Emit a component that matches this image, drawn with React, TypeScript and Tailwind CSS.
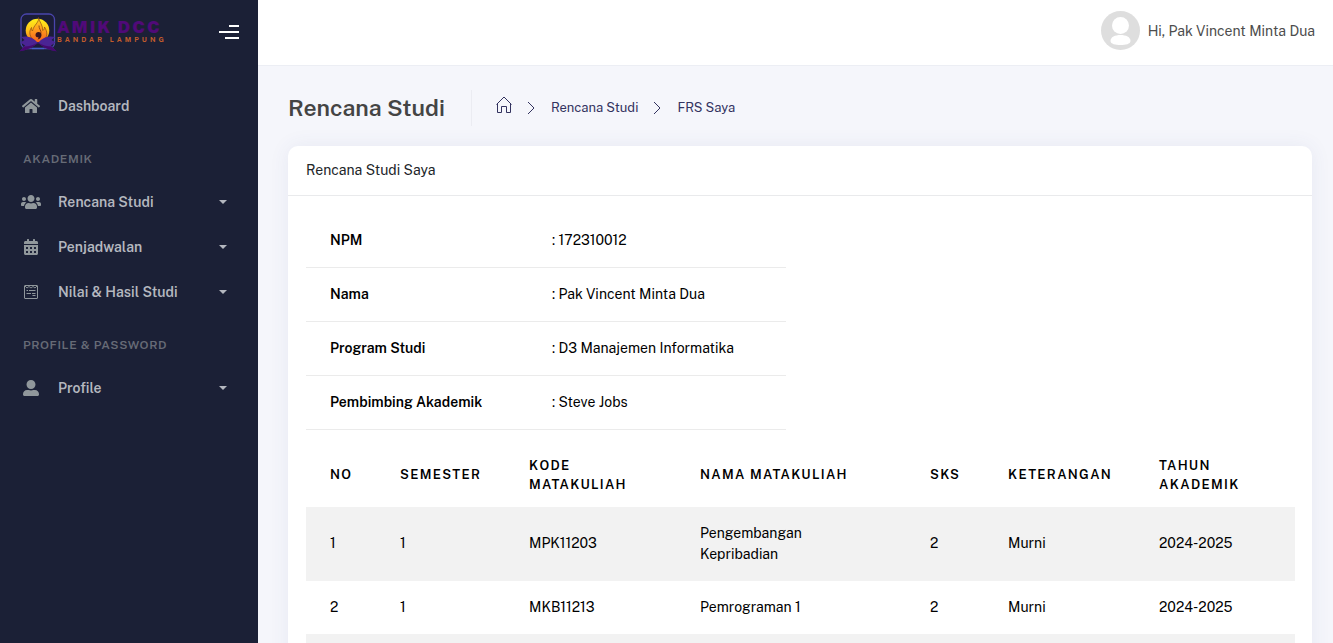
import { FaCalendarAlt, FaHome, FaUserAlt, FaUsers } from "react-icons/fa";
import type { ReactNode } from "react";

function LogoMark() {
  return (
    <svg viewBox="0 0 38 40" className="h-10 w-[38px] shrink-0" aria-hidden="true">
      <defs>
        <linearGradient id="sun" x1="0" y1="0" x2="0" y2="1">
          <stop offset="0" stopColor="#fff01a" />
          <stop offset="0.5" stopColor="#ffc01a" />
          <stop offset="1" stopColor="#f0701c" />
        </linearGradient>
        <linearGradient id="flame" x1="0" y1="0" x2="0" y2="1">
          <stop offset="0" stopColor="#ffd81e" />
          <stop offset="0.5" stopColor="#ff9a1e" />
          <stop offset="1" stopColor="#f4611e" />
        </linearGradient>
      </defs>
      <rect x="2" y="2" width="33.500" height="34.500" rx="5.500" fill="#1b1d38" stroke="#4a45ac" strokeWidth="1.300" />
      <circle cx="18.500" cy="18.500" r="11.800" fill="url(#sun)" />
      <path d="M19.500 5.500c1 5-5 7.500-6 13.500-1-1-1.200-2-1-3.500-3 4.500-2 10.500 3 14.500h8c5-4 5.500-10 2-15 0 2-.6 3-1.800 3.500C24 13.500 20.500 10 19.500 5.500z" fill="url(#flame)" />
      <path d="M15.500 29c-5-4-6-9-3-13.500-.2 1.500 0 2.500 1 3.500 1-6 7-8.500 6-13.500 1 4.500 4.500 8 4.200 13 1.200-.5 1.800-1.500 1.800-3.500 3.500 5 3 11-2 15" fill="none" stroke="#8a4a14" strokeWidth="0.700" />
      <path d="M20 13.500c-.3 3 2.500 5 2 8" fill="none" stroke="#7a3414" strokeWidth="0.800" />
      <path d="M16.500 23c0-1.800 1.300-3 3-3s3 1.300 3 3c0 2.200-1.500 4-4 4.500 1-.8 1.200-1.500.8-2.200-1.600.2-2.800-.8-2.800-2.300z" fill="#3a1420" />
      <path d="M19 31C14 25 8 23.500 2 25l3.500 3L1.500 30.500 6 33.500l-5 5.500c7-1 13-4 18-8z" fill="#4a2494" />
      <path d="M19 31C24 25 30 23.500 36 25l-3.500 3 4 2.500-4.500 3 5 5.500c-7-1-13-4-18-8z" fill="#4a2494" />
      <path d="M0 39.500c7-1 14-4 19-8.500 5 4.500 12 7.500 19 8.500L32.500 34.500C28 34.500 23 33 19 30.500c-4 2.500-9 4-13.500 4z" fill="#46096f" />
      <path d="M13 36.500h12" stroke="#4560c8" strokeWidth="1.300" />
    </svg>
  );
}

function NoteIcon() {
  return (
    <svg viewBox="0 0 16 16" className="h-4 w-4" fill="none" stroke="currentColor" aria-hidden="true">
      <rect x="1.500" y="1.500" width="13" height="13" rx="0.500" />
      <path d="M2 2l2 2 2-1.500L8 4l2-1.500L12 4l2-2" strokeWidth="0.900" />
      <path d="M3.500 6.500h1.500M6 6.500h6.500M3.500 9.500h4.500M9 9.500h3.500M9.500 11.500h3" />
    </svg>
  );
}

function HouseIcon() {
  return (
    <svg viewBox="0 0 16 17" className="h-[17px] w-4" fill="none" stroke="currentColor" strokeWidth="1" aria-hidden="true">
      <path d="M.5 8.500L8 1l7.500 7.500M1.500 7.800v8.700h4V10.500h5v6h4V7.800" />
    </svg>
  );
}

function Chevron() {
  return (
    <svg viewBox="0 0 8 14" className="h-3.5 w-2" fill="none" stroke="currentColor" strokeWidth="1" aria-hidden="true">
      <path d="M1 1l6 6-6 6" />
    </svg>
  );
}

function Caret() {
  return (
    <svg viewBox="0 0 8 4" className="mr-[31px] h-1 w-2" fill="currentColor" aria-hidden="true">
      <path d="M0 0h8L4 4z" />
    </svg>
  );
}

function MenuItem({ icon, label, dropdown = true }: { icon: ReactNode; label: string; dropdown?: boolean }) {
  const inner = (
    <>
      <span className="flex w-5 justify-center text-[#90979b]">{icon}</span>
      <span className="ml-[17px] flex-1 text-left">{label}</span>
      {dropdown && <Caret />}
    </>
  );
  const style = "flex h-[45px] w-full items-center pl-[21px] text-sm font-semibold text-[#b4b7bf]";
  return (
    <li>
      {dropdown ? (
        <button type="button" className={style}>{inner}</button>
      ) : (
        <a href="#dashboard" className={style}>{inner}</a>
      )}
    </li>
  );
}

function MenuHeading({ children }: { children: ReactNode }) {
  return (
    <h2 className="flex h-[51px] items-center pt-2.5 pl-[23px] text-xs font-semibold tracking-wider text-[#676b76]">{children}</h2>
  );
}

function Sidebar() {
  return (
    <aside className="w-[258px] shrink-0 bg-[#1b2036]">
      <div className="flex h-[63px] items-center justify-between px-[19px]">
        <a href="#home" className="flex items-center">
          <LogoMark />
          <span className="flex flex-col whitespace-nowrap">
            <span className="text-[17px] leading-[17px] font-black tracking-[2px] text-[#500a78]">AMIK DCC</span>
            <span className="text-[7px] leading-[8px] font-bold tracking-[3px] text-[#c25c2c]">BANDAR LAMPUNG</span>
          </span>
        </a>
        <button type="button" aria-label="Toggle menu" className="flex w-5 flex-col items-end gap-1">
          <span className="h-0.5 w-2.5 bg-white" />
          <span className="h-0.5 w-5 bg-white" />
          <span className="h-0.5 w-3.5 bg-white" />
        </button>
      </div>
      <nav className="pt-5">
        <ul>
          <MenuItem icon={<FaHome className="h-[18px] w-[18px]" />} label="Dashboard" dropdown={false} />
        </ul>
        <MenuHeading>AKADEMIK</MenuHeading>
        <ul>
          <MenuItem icon={<FaUsers className="h-5 w-5" />} label="Rencana Studi" />
          <MenuItem icon={<FaCalendarAlt className="h-4 w-4" />} label="Penjadwalan" />
          <MenuItem icon={<NoteIcon />} label="Nilai & Hasil Studi" />
        </ul>
        <MenuHeading>PROFILE &amp; PASSWORD</MenuHeading>
        <ul>
          <MenuItem icon={<FaUserAlt className="h-4 w-4" />} label="Profile" />
        </ul>
      </nav>
    </aside>
  );
}

const student = [
  ["NPM", "172310012"],
  ["Nama", "Pak Vincent Minta Dua"],
  ["Program Studi", "D3 Manajemen Informatika"],
  ["Pembimbing Akademik", "Steve Jobs"],
];

const columns = [
  { title: "NO", width: "w-[70px]" },
  { title: "SEMESTER", width: "w-[129px]" },
  { title: "KODE MATAKULIAH", width: "w-[171px]" },
  { title: "NAMA MATAKULIAH", width: "" },
  { title: "SKS", width: "w-[78px]" },
  { title: "KETERANGAN", width: "w-[151px]" },
  { title: "TAHUN AKADEMIK", width: "w-[160px]" },
];

const courses = [
  ["1", "1", "MPK11203", "Pengembangan Kepribadian", "2", "Murni", "2024-2025"],
  ["2", "1", "MKB11213", "Pemrograman 1", "2", "Murni", "2024-2025"],
  ["", "", "", "", "", "", ""],
];

export default function App() {
  return (
    <div className="flex h-screen overflow-hidden bg-[#f5f6fb] font-['Public_Sans','Inter',sans-serif] text-sm text-black">
      <Sidebar />
      <div className="flex min-w-0 flex-1 flex-col">
        <header className="flex h-[66px] shrink-0 items-center justify-end border-b border-[#eceef4] bg-white pr-[18px]">
          <button type="button" className="flex items-center gap-2 pb-1 text-[#4d4d4d]">
            <svg viewBox="0 0 39 39" className="h-[39px] w-[39px]" aria-hidden="true">
              <circle cx="19.500" cy="19.500" r="19.500" fill="#dedede" />
              <circle cx="19.500" cy="14.500" r="8.500" fill="#fff" />
              <path d="M9.500 30c0-4 4.500-6 10-6s10 2 10 6c0 3-5 4-10 4s-10-1-10-4z" fill="#fff" />
            </svg>
            <span>Hi, Pak Vincent Minta Dua</span>
          </button>
        </header>
        <main className="min-h-0 flex-1 overflow-y-auto pr-[21px] pl-[30px] [scrollbar-width:none]">
          <div className="flex h-20 items-center pt-1">
            <h1 className="border-r border-[#ebecf2] py-0.5 pr-[26px] text-[23px] leading-8 font-semibold text-[#444]">Rencana Studi</h1>
            <nav aria-label="Breadcrumb" className="ml-6 flex items-center text-[13px] text-[#33335f]">
              <a href="#home" aria-label="Home" className="pb-[7px]"><HouseIcon /></a>
              <span className="mr-4 ml-[15px]"><Chevron /></span>
              <a href="#rencana">Rencana Studi</a>
              <span className="mr-4 ml-[15px]"><Chevron /></span>
              <a href="#frs">FRS Saya</a>
            </nav>
          </div>
          <section className="rounded-t-[10px] bg-white shadow-[0_0_20px_rgba(70,80,140,0.08)]">
            <h2 className="h-[50px] border-b border-[#e9eaec] px-[18px] leading-[48px] text-[#212529]">Rencana Studi Saya</h2>
            <div className="px-[17px] pt-[17px] pl-[18px]">
              <div className="grid grid-cols-2 gap-[30px]">
                <table className="w-full table-fixed border-collapse text-left">
                  <tbody>
                    {student.map(([name, value]) => (
                      <tr key={name} className="h-[54px] border-b border-[#ebebeb]">
                        <th scope="row" className="w-[222px] px-6 font-semibold">{name}</th>
                        <td className="px-6">: {value}</td>
                      </tr>
                    ))}
                  </tbody>
                </table>
              </div>
              <table className="mt-[15px] w-full table-fixed border-collapse text-left">
                <thead>
                  <tr>
                    {columns.map((c) => (
                      <th key={c.title} scope="col" className={`${c.width} px-6 pt-[11px] pb-[13px] text-[13px] leading-[19px] font-semibold tracking-widest`}>{c.title}</th>
                    ))}
                  </tr>
                </thead>
                <tbody>
                  {courses.map((row, i) => (
                    <tr key={i} className="h-[53px] odd:bg-[#f2f2f2]">
                      {row.map((cell, j) => (
                        <td key={j} className="px-6 py-4 leading-[21px]">{cell}</td>
                      ))}
                    </tr>
                  ))}
                </tbody>
              </table>
            </div>
          </section>
        </main>
      </div>
    </div>
  );
}
